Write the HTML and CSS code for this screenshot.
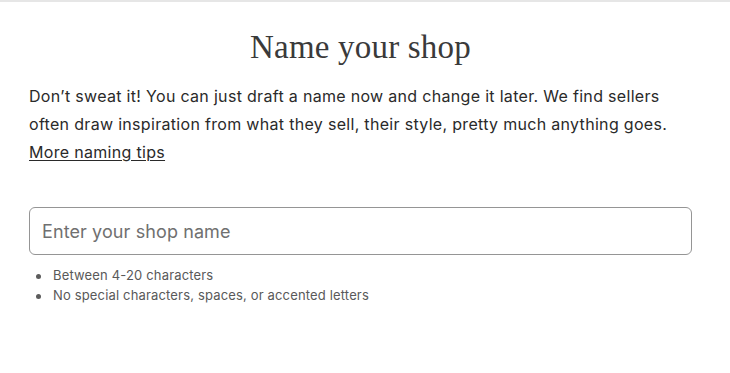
FILE: index.html
```html
<!DOCTYPE html>
<html lang="en">
<head>
<meta charset="utf-8">
<link rel="stylesheet" href="styles.css">
</head>
<body>
<main class="page">
  <h1 class="title">Name your shop</h1>
  <p class="intro">Don’t sweat it! You can just draft a name now and change it later. We find sellers often draw inspiration from what they sell, their style, pretty much anything goes. <a href="#" class="tips">More naming tips</a></p>
  <div class="field">
    <input class="name-input" type="text" placeholder="Enter your shop name">
  </div>
  <ul class="rules">
    <li>Between 4-20 characters</li>
    <li>No special characters, spaces, or accented letters</li>
  </ul>
</main>
</body>
</html>
```
FILE: styles.css
```css
html, body {
  margin: 0;
  padding: 0;
  background: #fff;
}
body {
  border-top: 2px solid #e6e6e6;
  font-family: "Inter", "Liberation Sans", sans-serif;
  color: #222;
}
.page {
  padding: 0 38px 0 29px;
}
.title {
  margin: 23px 0 0;
  text-align: center;
  font-family: "Liberation Serif", serif;
  font-weight: 400;
  font-size: 33px;
  line-height: 44px;
  letter-spacing: 0.2px;
  color: #3a3a3a;
}
.intro {
  margin: 13px 0 0;
  font-size: 16px;
  line-height: 28px;
  letter-spacing: 0.31px;
  color: #2a2a2a;
}
.tips {
  display: inline-block;
  color: #2a2a2a;
  text-decoration: underline;
  text-underline-offset: 2px;
}
.field {
  margin-top: 41px;
}
.name-input {
  box-sizing: border-box;
  display: block;
  width: 100%;
  height: 48px;
  border: 1px solid #959595;
  border-radius: 6px;
  padding: 0 12px;
  font-family: "Inter", "Liberation Sans", sans-serif;
  font-size: 18px;
  letter-spacing: 0.1px;
  color: #222;
  outline: none;
}
.name-input::placeholder {
  color: #707070;
}
.rules {
  list-style: none;
  margin: 10px 0 0;
  padding: 0 0 0 7px;
  font-size: 13px;
  line-height: 20px;
  letter-spacing: 0.16px;
  color: #595959;
}
.rules li {
  display: flex;
  align-items: center;
}
.rules li::before {
  content: "";
  width: 5px;
  height: 5px;
  margin: 2px 12px 0 0;
  border-radius: 50%;
  background: #5c5c5c;
  flex: none;
}
```
